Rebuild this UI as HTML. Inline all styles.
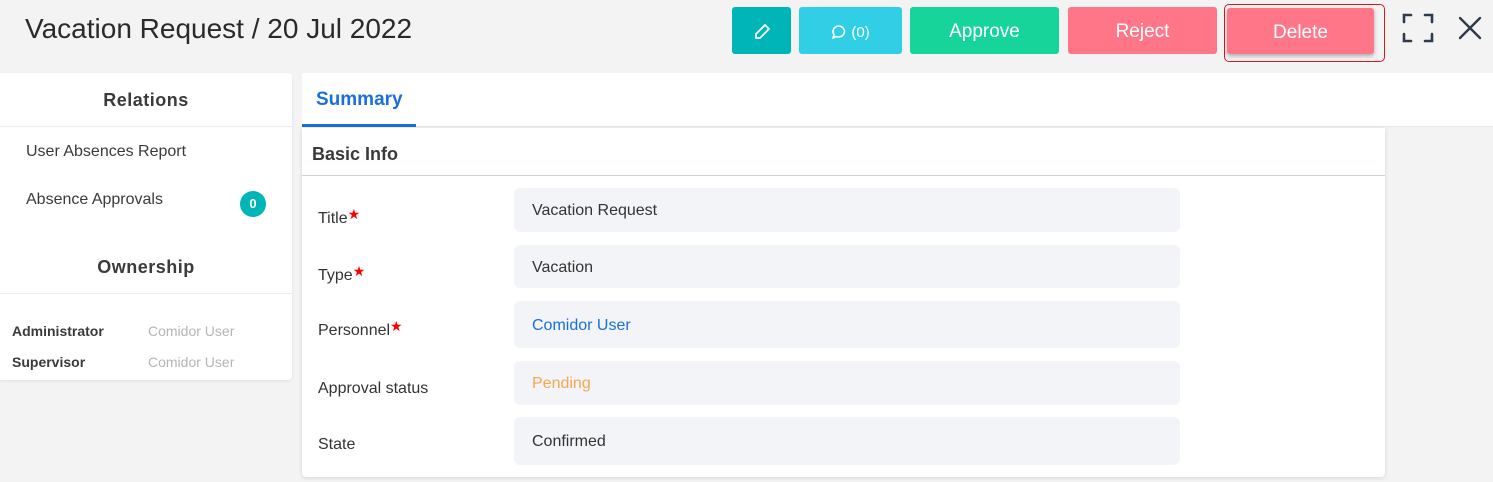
<!DOCTYPE html>
<html><head><meta charset="utf-8"><style>
*{box-sizing:border-box;margin:0;padding:0}
body{width:1493px;height:482px;background:#f3f3f3;font-family:"Liberation Sans",sans-serif;position:relative;overflow:hidden;color:#333}
.a{position:absolute}
.btn{position:absolute;border-radius:3px;color:#fff;font-size:19px;display:flex;align-items:center;justify-content:center;padding-top:3px}
.lbl{position:absolute;left:318px;font-size:16px;color:#333}
.star{color:#f00;font-size:14px;vertical-align:4px}
.inp{position:absolute;left:514px;width:666px;background:#f2f4f7;border-radius:6px;font-size:16px;padding-left:18px;padding-top:2px;display:flex;align-items:center;color:#333}
</style></head><body>
<div class="a" style="left:25px;top:13px;font-size:28px;color:#2a2a2a">Vacation Request / 20 Jul 2022</div>
<div class="btn" style="left:732px;top:7px;width:59px;height:47px;background:#00b5b8">
<svg width="20" height="20" viewBox="0 0 20 20" fill="none" stroke="#fff" stroke-width="1.8" stroke-linejoin="round"><path d="M13 3l4 4-9 9H4v-4z"/></svg></div>
<div class="btn" style="left:799px;top:7px;width:103px;height:47px;background:#30cfe6;font-size:15px">
<svg width="16" height="16" viewBox="0 0 16 16" fill="none" stroke="#fff" stroke-width="1.6"><path d="M8 2a6 5.5 0 1 1-3 10.5L2 14l1-3.5A6 5.5 0 0 1 8 2z"/></svg>&nbsp;(0)</div>
<div class="btn" style="left:910px;top:7px;width:149px;height:47px;background:#17d49a">Approve</div>
<div class="btn" style="left:1068px;top:7px;width:149px;height:47px;background:#ff7689">Reject</div>
<div class="a" style="left:1224px;top:4px;width:161px;height:58px;border:1.5px solid #e0141e;border-radius:5px"></div>
<div class="btn" style="left:1227px;top:8px;width:147px;height:46px;background:#ff7689;box-shadow:0 2px 4px rgba(0,0,0,.3)">Delete</div>
<svg class="a" style="left:1402px;top:12px" width="32" height="32" viewBox="0 0 32 32" fill="none" stroke="#2d3a4a" stroke-width="2.6" stroke-linecap="round"><path d="M2 10V3h7M23 3h7v7M30 22v7h-7M9 29H2v-7"/></svg>
<svg class="a" style="left:1458px;top:16px" width="24" height="24" viewBox="0 0 24 24" fill="none" stroke="#2d3a4a" stroke-width="2.4" stroke-linecap="round"><path d="M2 2l20 20M22 2L2 22"/></svg>

<div class="a" style="left:0;top:73px;width:292px;height:307px;background:#fff;border-radius:0 4px 4px 0;box-shadow:0 1px 3px rgba(0,0,0,.08)"></div>
<div class="a" style="left:0;top:90px;width:292px;text-align:center;font-size:18px;font-weight:bold;color:#3a3a3a;letter-spacing:.5px">Relations</div>
<div class="a" style="left:0;top:126px;width:292px;height:1px;background:#ececec"></div>
<div class="a" style="left:26px;top:143px;font-size:16px;color:#3a3a3a">User Absences Report</div>
<div class="a" style="left:26px;top:191px;font-size:16px;color:#3a3a3a">Absence Approvals</div>
<div class="a" style="left:240px;top:191px;width:26px;height:26px;border-radius:50%;background:#00b5b8;color:#fff;font-size:13px;font-weight:bold;text-align:center;line-height:26px">0</div>
<div class="a" style="left:0;top:257px;width:292px;text-align:center;font-size:18px;font-weight:bold;color:#3a3a3a;letter-spacing:.5px">Ownership</div>
<div class="a" style="left:0;top:293px;width:292px;height:1px;background:#ececec"></div>
<div class="a" style="left:12px;top:323px;font-size:14px;font-weight:bold;color:#3a3a3a">Administrator</div>
<div class="a" style="left:148px;top:323px;font-size:14px;color:#b5b5b5">Comidor User</div>
<div class="a" style="left:12px;top:354px;font-size:14px;font-weight:bold;color:#3a3a3a">Supervisor</div>
<div class="a" style="left:148px;top:354px;font-size:14px;color:#b5b5b5">Comidor User</div>

<div class="a" style="left:302px;top:73px;width:1191px;height:54px;background:#fff;border-bottom:1px solid #e8e8e8"></div>
<div class="a" style="left:316px;top:89px;font-size:19px;color:#1a6fd8;font-weight:bold">Summary</div>
<div class="a" style="left:302px;top:124px;width:114px;height:3px;background:#1a6fd8"></div>
<div class="a" style="left:302px;top:128px;width:1083px;height:349px;background:#fff;border-radius:0 0 4px 4px;box-shadow:0 1px 4px rgba(0,0,0,.12)"></div>
<div class="a" style="left:312px;top:144px;font-size:18px;font-weight:bold;color:#3a3a3a">Basic Info</div>
<div class="a" style="left:302px;top:175px;width:1083px;height:1px;background:#c8d8c8"></div>

<div class="lbl" style="top:206px">Title<span class="star">★</span></div>
<div class="inp" style="top:188px;height:44px">Vacation Request</div>
<div class="lbl" style="top:263px">Type<span class="star">★</span></div>
<div class="inp" style="top:245px;height:43px">Vacation</div>
<div class="lbl" style="top:318px">Personnel<span class="star">★</span></div>
<div class="inp" style="top:301px;height:47px;color:#1a6fd8">Comidor User</div>
<div class="lbl" style="top:380px">Approval status</div>
<div class="inp" style="top:361px;height:44px;color:#f7a64a">Pending</div>
<div class="lbl" style="top:436px">State</div>
<div class="inp" style="top:417px;height:48px">Confirmed</div>
</body></html>
